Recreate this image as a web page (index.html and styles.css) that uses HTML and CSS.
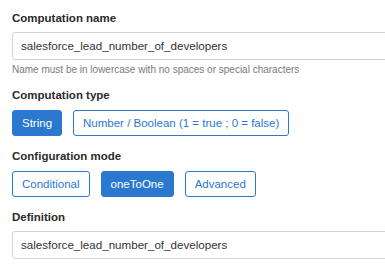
FILE: index.html
```html
<!DOCTYPE html>
<html>
<head>
<meta charset="utf-8">
<link rel="stylesheet" href="styles.css">
</head>
<body>
<div class="form">
  <div class="field">
    <label class="label">Computation name</label>
    <div class="input">salesforce_lead_number_of_developers</div>
    <div class="help">Name must be in lowercase with no spaces or special characters</div>
  </div>
  <div class="field">
    <label class="label">Computation type</label>
    <div class="buttons">
      <button class="btn active">String</button>
      <button class="btn">Number / Boolean (1 = true ; 0 = false)</button>
    </div>
  </div>
  <div class="field">
    <label class="label">Configuration mode</label>
    <div class="buttons">
      <button class="btn">Conditional</button>
      <button class="btn active">oneToOne</button>
      <button class="btn">Advanced</button>
    </div>
  </div>
  <div class="field">
    <label class="label">Definition</label>
    <div class="input">salesforce_lead_number_of_developers</div>
  </div>
</div>
</body>
</html>
```
FILE: styles.css
```css
html, body {
  margin: 0;
  padding: 0;
  background: #ffffff;
}
body {
  font-family: "Liberation Sans", Arial, sans-serif;
  color: #333333;
}
.form {
  box-sizing: border-box;
  width: 100%;
  height: 266px;
  overflow: hidden;
  padding: 10px 0 0 12px;
}
.field {
  display: flex;
  flex-direction: column;
  width: 390px;
}
.label {
  display: block;
  font-weight: bold;
  font-size: 11.5px;
  line-height: 16px;
  color: #2b2b2b;
  margin-bottom: 6px;
}
.input {
  box-sizing: border-box;
  height: 28px;
  border: 1px solid #d4d4d4;
  border-radius: 3px;
  padding: 0 8px;
  font-size: 11.6px;
  line-height: 26px;
  color: #333333;
  width: 390px;
}
.help {
  font-size: 10px;
  line-height: 13px;
  color: #7a7a7a;
  margin-top: 3px;
  margin-bottom: 11px;
}
.buttons {
  display: flex;
  gap: 11px;
  margin-top: 1px;
  margin-bottom: 12px;
}
.btn {
  box-sizing: border-box;
  height: 26px;
  padding: 0 9px;
  border: 1px solid #2a78d0;
  border-radius: 3px;
  background: #ffffff;
  color: #2a78d0;
  font-family: "Liberation Sans", Arial, sans-serif;
  font-size: 11.5px;
}
.btn.active {
  background: #2a78d0;
  color: #ffffff;
}
```
